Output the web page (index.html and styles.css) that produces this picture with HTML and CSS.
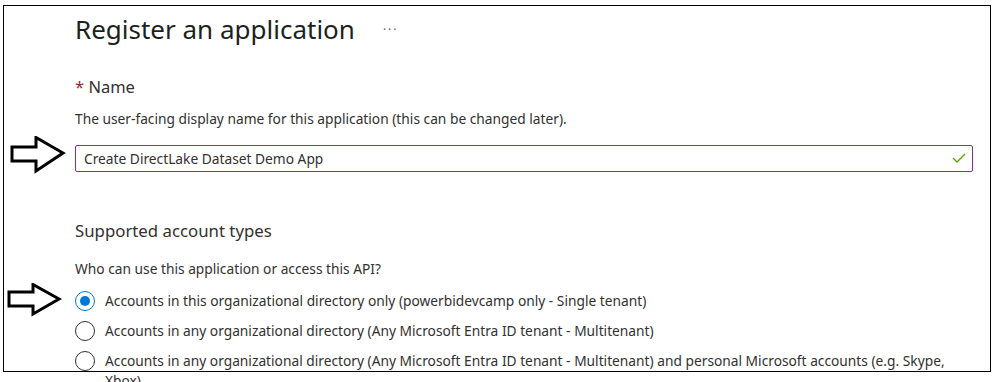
FILE: index.html
```html
<!DOCTYPE html>
<html lang="en">
<head>
  <meta charset="UTF-8">
  <title>Register an application</title>
  <link rel="stylesheet" href="styles.css">
</head>
<body>
  <div class="page">
    <div class="header">
      <h1>Register an application</h1>
      <span class="more">&middot;&middot;&middot;</span>
    </div>

    <div class="label"><span class="required">*</span> Name</div>
    <p class="hint">The user-facing display name for this application (this can be changed later).</p>
    <div class="field">
      <input type="text" value="Create DirectLake Dataset Demo App">
      <svg class="check" width="14" height="10" viewBox="0 0 14 10">
        <path d="M1 5 L5 9 L13 1" fill="none" stroke="#57a300" stroke-width="1.3"/>
      </svg>
    </div>

    <h2>Supported account types</h2>
    <p class="question">Who can use this application or access this API?</p>
    <div class="options">
      <label class="option"><span class="radio checked"></span><span>Accounts in this organizational directory only (powerbidevcamp only - Single tenant)</span></label>
      <label class="option"><span class="radio"></span><span>Accounts in any organizational directory (Any Microsoft Entra ID tenant - Multitenant)</span></label>
      <label class="option"><span class="radio"></span><span>Accounts in any organizational directory (Any Microsoft Entra ID tenant - Multitenant) and personal Microsoft accounts (e.g. Skype, Xbox)</span></label>
    </div>
  </div>

  <div class="frame"></div>

  <svg class="arrow arrow-name" width="56" height="38" viewBox="0 0 56 38">
    <path d="M2 11 H26 V1.5 L53 17 L26 35 V25 H2 Z" fill="#fff" stroke="#000" stroke-width="3" stroke-linejoin="miter"/>
  </svg>
  <svg class="arrow arrow-radio" width="56" height="34" viewBox="0 0 56 34">
    <path d="M2 9 H26 V1.5 L52 16 L26 31 V23 H2 Z" fill="#fff" stroke="#000" stroke-width="3" stroke-linejoin="miter"/>
  </svg>
</body>
</html>
```

FILE: styles.css
```css
html, body {
  margin: 0;
  padding: 0;
  background: #fff;
  overflow: hidden;
}
body {
  font-family: "Noto Sans", "Open Sans", sans-serif;
  color: #323130;
  width: 1004px;
  height: 382px;
  position: relative;
}
.page {
  padding: 11px 0 0 75px;
  width: 898px;
}
.header {
  display: flex;
  align-items: center;
  height: 36px;
}
h1 {
  margin: 0;
  font-size: 26px;
  font-weight: 400;
  line-height: 36px;
  color: #201f1e;
}
.more {
  margin-left: 28px;
  font-size: 12px;
  color: #605e5c;
  letter-spacing: 2px;
}
.label {
  margin-top: 29px;
  font-size: 16.5px;
  line-height: 22px;
}
.required {
  color: #a4262c;
}
.hint, .question {
  margin: 11px 0 0;
  font-size: 13.75px;
  line-height: 20px;
}
.field {
  position: relative;
  margin-top: 16px;
}
.field input {
  display: block;
  box-sizing: border-box;
  width: 100%;
  height: 27px;
  padding: 0 8px;
  border: 1.5px solid #8a2da5;
  border-radius: 2px;
  font-family: inherit;
  font-size: 13.75px;
  color: #323130;
  outline: none;
}
.check {
  position: absolute;
  right: 7px;
  top: 8px;
}
h2 {
  margin: 47px 0 0;
  font-size: 16.8px;
  font-weight: 400;
  line-height: 24px;
}
.question {
  margin-top: 16px;
}
.options {
  margin-top: 7px;
}
.option {
  display: flex;
  align-items: flex-start;
  gap: 10px;
  padding: 5px 0;
  font-size: 13.75px;
  line-height: 20px;
}
.radio {
  flex: none;
  box-sizing: border-box;
  width: 20px;
  height: 20px;
  border: 1.3px solid #323130;
  border-radius: 50%;
  display: flex;
  align-items: center;
  justify-content: center;
}
.radio.checked {
  border-color: #0078d4;
}
.radio.checked::after {
  content: "";
  width: 10px;
  height: 10px;
  border-radius: 50%;
  background: #0078d4;
}
.frame {
  position: absolute;
  left: 3px;
  top: 5px;
  width: 988px;
  height: 367px;
  box-sizing: border-box;
  border: 1.5px solid #000;
  pointer-events: none;
}
.arrow {
  position: absolute;
}
.arrow-name {
  left: 10px;
  top: 136px;
}
.arrow-radio {
  left: 7px;
  top: 283px;
}
```
